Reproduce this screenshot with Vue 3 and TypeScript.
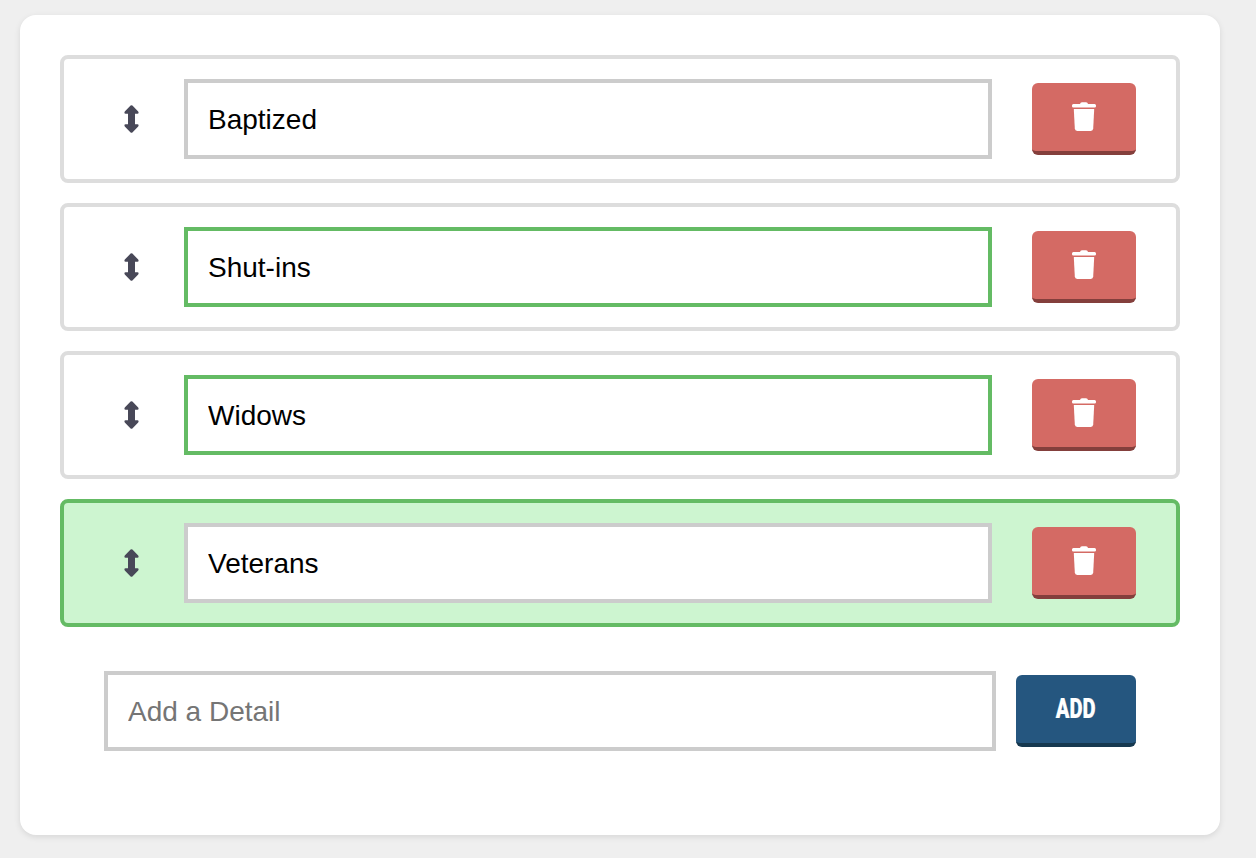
<script setup lang="ts">
interface Detail {
  name: string;
  inputValid: boolean;
  rowActive: boolean;
}

const details: Detail[] = [
  { name: "Baptized", inputValid: false, rowActive: false },
  { name: "Shut-ins", inputValid: true, rowActive: false },
  { name: "Widows", inputValid: true, rowActive: false },
  { name: "Veterans", inputValid: false, rowActive: true },
];
</script>

<template>
  <main class="page">
    <section class="card">
      <div class="list">
        <div
          v-for="detail in details"
          :key="detail.name"
          class="row"
          :class="{ active: detail.rowActive }"
        >
          <div class="handle">
            <svg width="15" height="28" viewBox="0 0 15 28" aria-hidden="true">
              <path
                fill="#484858"
                d="M6.6 .6 Q7.5 -.1 8.4 .6 L14.2 6.6 Q15.3 8.6 13.4 8.8 H11 V19.2 H13.4 Q15.3 19.4 14.2 21.4 L8.4 27.4 Q7.5 28.1 6.6 27.4 L.8 21.4 Q-.3 19.4 1.6 19.2 H4 V8.8 H1.6 Q-.3 8.6 .8 6.6 Z"
              />
            </svg>
          </div>
          <input class="field" :class="{ valid: detail.inputValid }" :value="detail.name" />
          <button class="btn delete" type="button" aria-label="Delete">
            <svg class="trash" width="24" height="29" viewBox="0 0 24 29" aria-hidden="true">
              <path
                fill="#fff"
                d="M8 2 Q8.3 .2 10 .2 H14 Q15.7 .2 16 2 H22.6 Q24 2.2 24 3.6 V4.2 Q24 5.6 22.6 5.6 H1.4 Q0 5.6 0 4.2 V3.6 Q0 2.2 1.4 2 Z"
              />
              <path
                fill="#fff"
                d="M1.8 7 H22.2 L21.2 26.6 Q21 29 18.8 29 H5.2 Q3 29 2.8 26.6 Z"
              />
            </svg>
          </button>
        </div>
      </div>

      <form class="add-row" @submit.prevent>
        <input class="field add-field" placeholder="Add a Detail" />
        <button class="btn add" type="submit"><span class="add-label">ADD</span></button>
      </form>
    </section>
  </main>
</template>

<style>
html,
body {
  margin: 0;
  background: #efefef;
}
</style>

<style scoped>
.page {
  box-sizing: border-box;
  width: 1256px;
  height: 858px;
  padding: 15px 36px 0 20px;
  background: #efefef;
  font-family: "Liberation Sans", Arial, sans-serif;
  overflow: hidden;
}

.card {
  box-sizing: border-box;
  width: 1200px;
  height: 820px;
  padding: 40px;
  background: #fff;
  border-radius: 16px;
  box-shadow: 0 2px 6px rgba(0, 0, 0, 0.1);
}

.list {
  display: flex;
  flex-direction: column;
  gap: 20px;
}

.row {
  box-sizing: border-box;
  height: 128px;
  display: flex;
  align-items: center;
  padding: 20px 40px 20px 0;
  border: 4px solid #dddddd;
  border-radius: 8px;
  background: #fff;
}

.row.active {
  border-color: #64bb64;
  background: #cdf5d0;
}

.handle {
  flex: none;
  width: 120px;
  padding-left: 15px;
  box-sizing: border-box;
  display: flex;
  justify-content: center;
}

.handle svg {
  display: block;
}

.field {
  box-sizing: border-box;
  height: 80px;
  padding: 2px 20px 0;
  border: 4px solid #cccccc;
  border-radius: 0;
  outline: none;
  background: #fff;
  color: #000;
  font-family: inherit;
  font-size: 28px;
}

.row .field {
  width: 808px;
  margin-right: 40px;
}

.field.valid {
  border-color: #64bb64;
}

.field::placeholder {
  color: #757575;
  opacity: 1;
}

.btn {
  box-sizing: border-box;
  flex: none;
  height: 72px;
  padding: 0;
  border: 0;
  border-radius: 6px;
  display: flex;
  align-items: center;
  justify-content: center;
  color: #fff;
}

.btn svg {
  display: block;
}

.trash {
  margin-bottom: 1px;
}

.delete {
  width: 104px;
  background: #d46a64;
  border-bottom: 4px solid #843f3c;
}

.add-row {
  display: flex;
  align-items: center;
  gap: 20px;
  margin-top: 44px;
  padding-left: 44px;
}

.add-field {
  width: 892px;
}

.add {
  width: 120px;
  background: #25567f;
  border-bottom: 4px solid #16384f;
}

.add-label {
  display: inline-block;
  font-family: Roboto, "Liberation Sans", sans-serif;
  font-size: 28px;
  font-weight: 900;
  line-height: 28px;
  -webkit-text-stroke: 0.2px #fff;
  transform: scaleX(0.72);
}
</style>
